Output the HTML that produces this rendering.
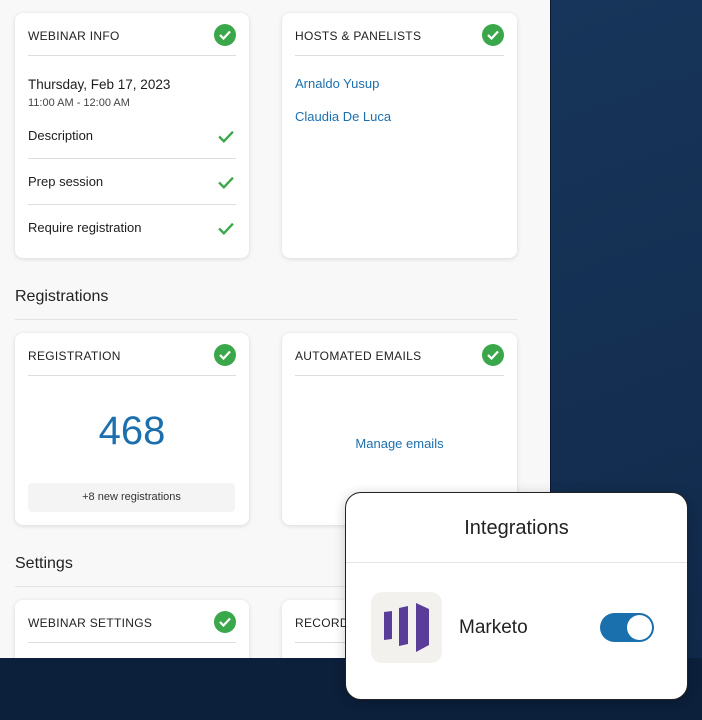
<!DOCTYPE html>
<html><head><meta charset="utf-8"><style>
*{margin:0;padding:0;box-sizing:border-box}
body{width:702px;height:720px;position:relative;overflow:hidden;background:#142d50;font-family:"Liberation Sans",sans-serif;color:#1d1d1d}
.bg{position:absolute;left:550px;top:0;width:152px;height:658px;background:linear-gradient(160deg,#17355a,#112a4b);border-left:1px solid #0b1a30}
.left{position:absolute;left:0;top:0;width:550px;height:658px;background:#f8f8f8}
.bottom{position:absolute;left:0;top:658px;width:702px;height:62px;background:#0c1f3b}
.card{position:absolute;background:#fff;border-radius:8px;box-shadow:0 1px 5px rgba(0,0,0,.13);overflow:hidden}
.hd{position:absolute;left:13px;right:13px;top:0;height:43px;border-bottom:1px solid #ddd;font-size:12px;letter-spacing:.3px;line-height:46px;color:#222}
.ok{position:absolute;right:0;top:11px;width:22px;height:22px;border-radius:50%;background:#3aa84a}
.ok svg{position:absolute;left:5px;top:6px}
.t{position:absolute;font-size:13px;white-space:nowrap}
.row{position:absolute;left:13px;right:13px;height:46px;font-size:13px;line-height:46px}
.row.b{border-bottom:1px solid #ddd}
.ck{position:absolute;right:2px;top:17px}
.h2{position:absolute;left:15px;font-size:16px;color:#222}
.hr{position:absolute;left:15px;width:502px;height:1px;background:#e2e2e2}
a{color:#1c6fae;text-decoration:none}
.pop{position:absolute;left:345px;top:492px;width:343px;height:208px;background:#fff;border-radius:16px;border:1px solid #222;box-shadow:0 2px 12px rgba(0,0,0,.2)}
</style></head><body>
<div class="left"></div>
<div class="bg"></div>
<div class="bottom"></div>

<div class="card" style="left:15px;top:13px;width:234px;height:245px">
 <div class="hd">WEBINAR INFO<div class="ok"><svg width="12" height="10" viewBox="0 0 12 10"><path d="M1 5l3.5 3.5L11 1.5" stroke="#fff" stroke-width="2.2" fill="none"/></svg></div></div>
 <div class="t" style="left:13px;top:64px;font-size:13.5px">Thursday, Feb 17, 2023</div>
 <div class="t" style="left:13px;top:84px;font-size:11px;color:#444">11:00 AM - 12:00 AM</div>
 <div class="row b" style="top:100px">Description<svg class="ck" width="16" height="13" viewBox="0 0 15 12"><path d="M1 6l4.5 4.5L14 1.5" stroke="#3aa84a" stroke-width="2.2" fill="none"/></svg></div>
 <div class="row b" style="top:146px">Prep session<svg class="ck" width="16" height="13" viewBox="0 0 15 12"><path d="M1 6l4.5 4.5L14 1.5" stroke="#3aa84a" stroke-width="2.2" fill="none"/></svg></div>
 <div class="row" style="top:192px">Require registration<svg class="ck" width="16" height="13" viewBox="0 0 15 12"><path d="M1 6l4.5 4.5L14 1.5" stroke="#3aa84a" stroke-width="2.2" fill="none"/></svg></div>
</div>

<div class="card" style="left:282px;top:13px;width:235px;height:245px">
 <div class="hd">HOSTS &amp; PANELISTS<div class="ok"><svg width="12" height="10" viewBox="0 0 12 10"><path d="M1 5l3.5 3.5L11 1.5" stroke="#fff" stroke-width="2.2" fill="none"/></svg></div></div>
 <div class="t" style="left:13px;top:63px"><a>Arnaldo Yusup</a></div>
 <div class="t" style="left:13px;top:96px"><a>Claudia De Luca</a></div>
</div>

<div class="h2" style="top:288px">Registrations</div>
<div class="hr" style="top:319px"></div>

<div class="card" style="left:15px;top:333px;width:234px;height:192px">
 <div class="hd">REGISTRATION<div class="ok"><svg width="12" height="10" viewBox="0 0 12 10"><path d="M1 5l3.5 3.5L11 1.5" stroke="#fff" stroke-width="2.2" fill="none"/></svg></div></div>
 <div class="t" style="left:0;width:234px;text-align:center;top:76px;font-size:40px;color:#1c6fae">468</div>
 <div style="position:absolute;left:13px;top:150px;width:207px;height:29px;background:#f4f4f4;border-radius:4px;font-size:11px;text-align:center;line-height:29px;color:#333">+8 new registrations</div>
</div>

<div class="card" style="left:282px;top:333px;width:235px;height:192px">
 <div class="hd">AUTOMATED EMAILS<div class="ok"><svg width="12" height="10" viewBox="0 0 12 10"><path d="M1 5l3.5 3.5L11 1.5" stroke="#fff" stroke-width="2.2" fill="none"/></svg></div></div>
 <div class="t" style="left:0;width:235px;text-align:center;top:103px"><a>Manage emails</a></div>
</div>

<div class="h2" style="top:555px">Settings</div>
<div class="hr" style="top:586px"></div>

<div class="card" style="left:15px;top:600px;width:234px;height:80px">
 <div class="hd">WEBINAR SETTINGS<div class="ok"><svg width="12" height="10" viewBox="0 0 12 10"><path d="M1 5l3.5 3.5L11 1.5" stroke="#fff" stroke-width="2.2" fill="none"/></svg></div></div>
</div>
<div class="card" style="left:282px;top:600px;width:235px;height:80px">
 <div class="hd">RECORDINGS</div>
</div>
<div class="bottom" style="z-index:1"></div>

<div class="pop" style="z-index:2">
 <div style="position:absolute;left:0;right:0;top:0;height:70px;border-bottom:1px solid #e4e4e4;text-align:center;line-height:70px;font-size:20px;color:#222">Integrations</div>
 <div style="position:absolute;left:25px;top:99px;width:71px;height:71px;background:#f3f1ee;border-radius:11px">
  <svg width="71" height="71" viewBox="0 0 71 71"><path d="M13 20l8-1v28l-8 1z M28 16l9-2v38l-9 2z M45 11l13 6v36l-13 7z" fill="#5a3d98"/></svg>
 </div>
 <div style="position:absolute;left:113px;top:124px;font-size:19px;color:#222">Marketo</div>
 <div style="position:absolute;left:254px;top:120px;width:54px;height:29px;border-radius:15px;background:#1a6fad">
  <div style="position:absolute;right:2px;top:2px;width:25px;height:25px;border-radius:50%;background:#fff"></div>
 </div>
</div>
</body></html>
